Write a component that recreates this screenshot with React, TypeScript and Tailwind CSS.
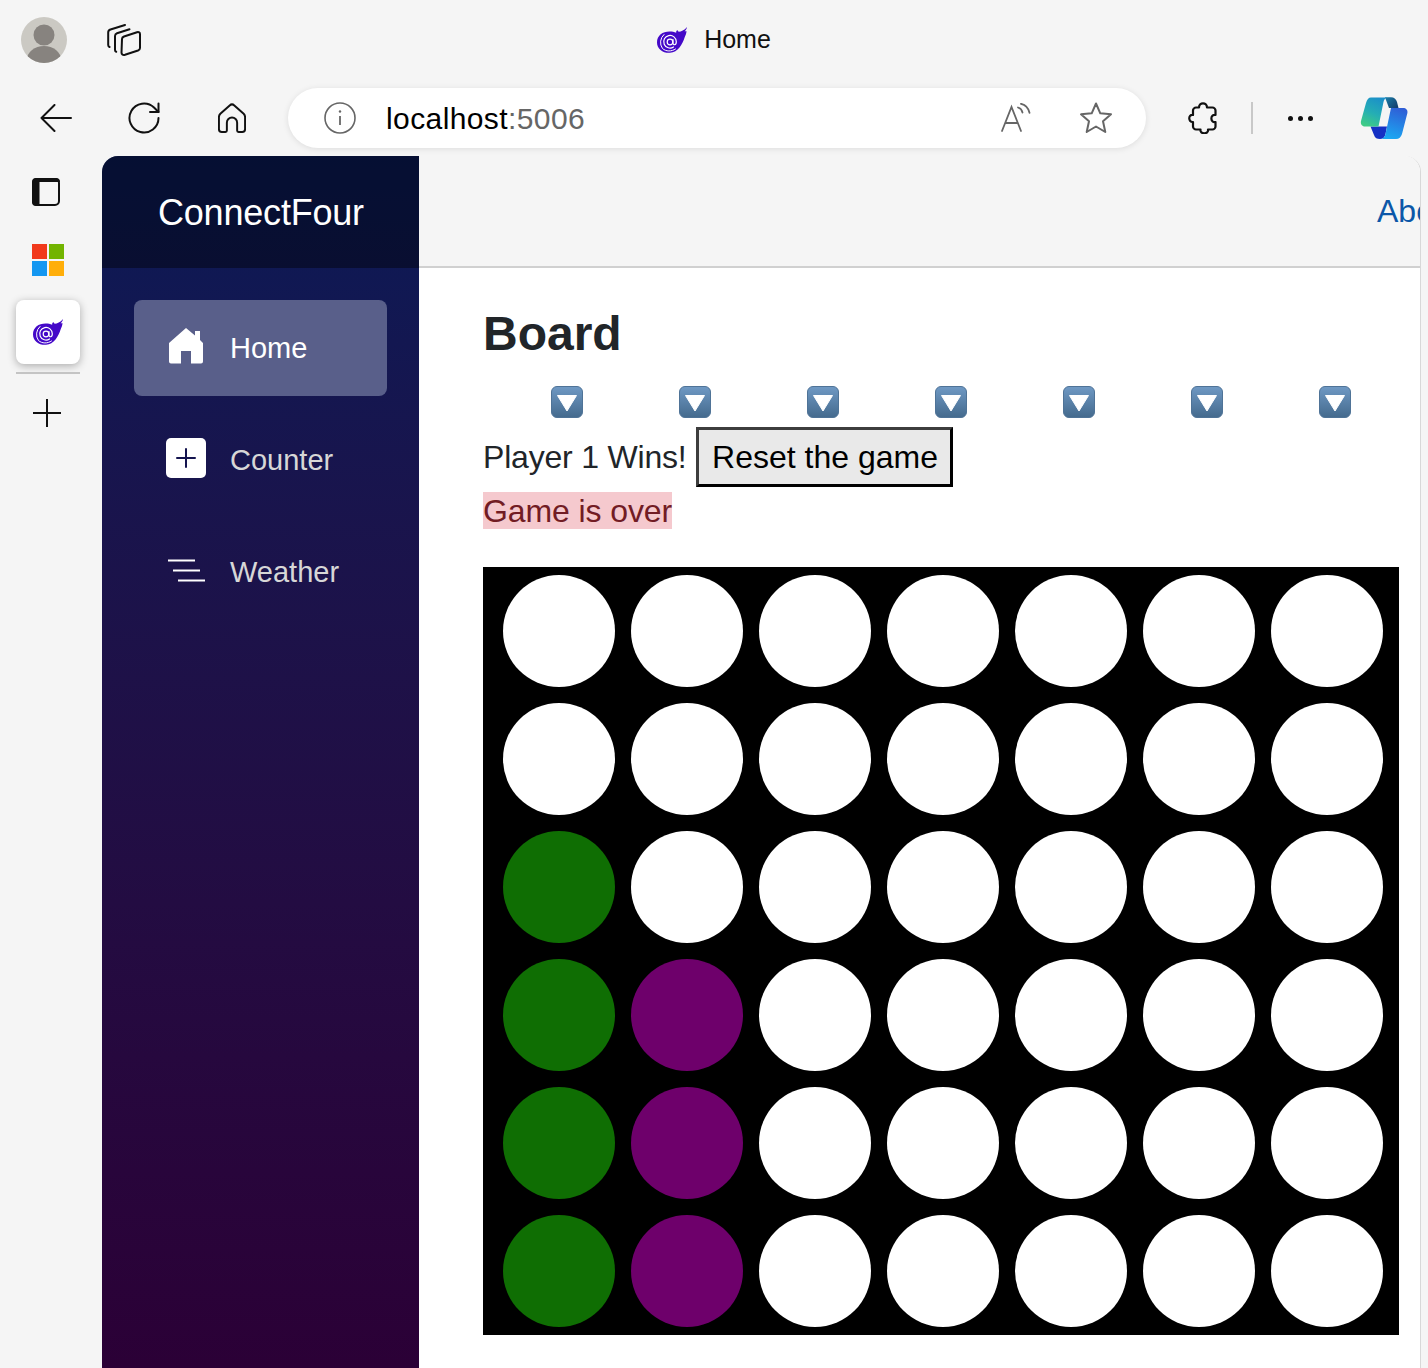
import React from 'react';

const SANS = "font-['Liberation_Sans',Arial,sans-serif]";

const BlazorLogo = ({ className }: { className: string }) => (
  <svg viewBox="0 0 30 26" className={className}>
    <path
      d="M30 0c-.4 2.2-1.2 3.2-2.4 4.2 .8 .1 1.5 .1 2 0-.4 2.6-1.2 4.4-2 6.2-2 6.6-6.6 14.8-14.6 15.4C6 26.2 0 22 0 15.4 0 8.6 5.6 4.6 12.6 4.600c2.6 0 4.6 .5 6.6 1.200C19 4.600 19.500 3.600 20.400 3c.2 .9 .6 1.500 1.400 1.800C24 4.600 27.400 3.400 30 0z"
      fill="#4408c8"
    />
    <g fill="none" stroke="#fff" strokeLinecap="round">
      <path d="M7 7.500A10.500 10.500 0 0 0 5.500 21.500c3.500 3.200 9 3.200 13 .5" strokeWidth="1" />
      <path d="M16 12.500v3.500c0 2.500 3.300 2.500 3.300-1.300A6.300 6.300 0 1 0 16.500 20" strokeWidth="1.200" />
      <circle cx="13" cy="15" r="2.800" strokeWidth="1.200" />
    </g>
  </svg>
);

const CopilotLogo = () => (
  <svg viewBox="0 0 48 42" className="w-[48px] h-[42px]">
    <defs>
      <linearGradient id="copL" x1="0.7" y1="0" x2="0.3" y2="1">
        <stop offset="0" stopColor="#1b8fc9" />
        <stop offset="0.55" stopColor="#25aeb4" />
        <stop offset="1" stopColor="#3ecb86" />
      </linearGradient>
      <linearGradient id="copR" x1="0.7" y1="0" x2="0.4" y2="1">
        <stop offset="0" stopColor="#2f5ed6" />
        <stop offset="1" stopColor="#1ba8f2" />
      </linearGradient>
      <linearGradient id="copT" x1="0" y1="0" x2="1" y2="0.7">
        <stop offset="0" stopColor="#1c7fa8" />
        <stop offset="1" stopColor="#13406f" />
      </linearGradient>
    </defs>
    <path d="M25 .3h6c3 0 5 1.700 6 4.700l1.500 6H29z" fill="url(#copT)" />
    <path d="M10.500 29.500H27L25.500 37c-.5 3-2.500 5-5.500 5s-5-1-6-4z" fill="#1530c4" />
    <path d="M11 .5h16c-2 .5-3 2.500-3.500 4.500l-5 24.500H5c-3 0-4.700-2.500-4-5.500L6 6c1-3.500 2.500-5.500 5-5.500z" fill="url(#copL)" />
    <path d="M31 11h12c3 0 5 2 4.400 5L42 37c-1 3-3 5-6 5H20c3 0 5-2 5.500-5z" fill="url(#copR)" />
  </svg>
);

const DownEmoji = () => (
  <svg viewBox="0 0 32 32" className="w-[32px] h-[32px] block">
    <defs>
      <linearGradient id="tile" x1="0" y1="0" x2="0" y2="1">
        <stop offset="0" stopColor="#6f99c4" />
        <stop offset="1" stopColor="#446a8d" />
      </linearGradient>
    </defs>
    <rect x="0.5" y="0.5" width="31" height="31" rx="5.500" fill="url(#tile)" stroke="#4f7397" />
    <path d="M6.500 9.500h19L16 25z" fill="#fff" stroke="#fff" strokeWidth="1" strokeLinejoin="round" />
  </svg>
);

const NavItem = ({ label, active, icon }: { label: string; active?: boolean; icon: React.ReactNode }) => (
  <div className={`h-[96px] rounded-lg flex items-center pl-8 ${active ? 'bg-[#595f8a] text-white' : 'text-[#d7d7d7]'}`}>
    <div className="w-[40px] h-[40px] flex items-center justify-center mr-6 mb-[4px]">{icon}</div>
    <span className="text-[29px] pt-[2px]">{label}</span>
  </div>
);

const rows = [
  'eeeeeee',
  'eeeeeee',
  'geeeeee',
  'gpeeeee',
  'gpeeeee',
  'gpeeeee',
];

const discColor = (c: string) => {
  if (c === 'g') return 'bg-[#0f6e03]';
  if (c === 'p') return 'bg-[#6e006b]';
  return 'bg-white';
};

const TitleBar = () => (
  <div className="h-[80px] shrink-0 grid grid-cols-[1fr_auto_1fr] items-center">
    <div className="flex items-center pl-[21px]">
      <svg viewBox="0 0 46 46" className="w-[46px] h-[46px]">
        <clipPath id="av"><circle cx="23" cy="23" r="23" /></clipPath>
        <circle cx="23" cy="23" r="23" fill="#cbc9c3" />
        <g clipPath="url(#av)">
          <circle cx="23" cy="18" r="10.500" fill="#87837f" />
          <ellipse cx="23" cy="43" rx="17" ry="14" fill="#87837f" />
        </g>
      </svg>
      <svg viewBox="0 0 34 32" className="w-[34px] h-[32px] ml-[40px]" fill="none" stroke="#111" strokeWidth="2" strokeLinejoin="round" strokeLinecap="round">
        <path d="M18 1 3.500 5.500C2 6 1.200 7 1.200 8.500V21c0 1 .5 1.600 1.300 2" />
        <path d="M22.500 5.300 10 9.300C8.600 9.800 8 10.800 8 12v14c0 1 .4 1.500 1.200 1.800" />
        <path d="M15 15c0-1.300 .7-2 2-2.500L30 8.200c1.800-.5 3 .3 3 2V24c0 1.300-.7 2-2 2.500L18 30.800c-2 .6-3.500-.3-3.500-2z" />
      </svg>
    </div>
    <div className="flex items-center">
      <BlazorLogo className="w-[30px] h-[26px]" />
      <span className="ml-[17px] text-[25px] text-[#111]">Home</span>
    </div>
    <div />
  </div>
);

const Toolbar = () => (
  <div className="h-[76px] shrink-0 flex items-center">
    <svg viewBox="0 0 32 28" className="ml-[40px] w-[32px] h-[28px]" fill="none" stroke="#111" strokeWidth="2" strokeLinecap="round" strokeLinejoin="round">
      <path d="M31 14H1.500M14.500 1 1.500 14l13 13" />
    </svg>
    <svg viewBox="0 0 32 32" className="ml-[56px] w-[32px] h-[32px]" fill="none" stroke="#111" strokeWidth="2" strokeLinecap="round" strokeLinejoin="round">
      <path d="M30.500 16A14.500 14.500 0 1 1 26 5.500L30.500 10" />
      <path d="M30.500 1.500V10H22" />
    </svg>
    <svg viewBox="0 0 30 32" className="ml-[58px] w-[28px] h-[30px]" fill="none" stroke="#111" strokeWidth="2.100" strokeLinejoin="round">
      <path d="M12.500 2.500 2.500 11.500C1.500 12.500 1 13.500 1 15v13c0 1.800 1.200 3 3 3h4c.8 0 1.500-.7 1.500-1.500V21c0-3 2.500-5.500 5.500-5.500s5.500 2.500 5.500 5.500v8.500c0 .8 .7 1.500 1.500 1.500h4c1.800 0 3-1.200 3-3V15c0-1.500-.5-2.500-1.500-3.500L17.500 2.500C16 1.200 14 1.200 12.500 2.500z" />
    </svg>
    <div className="ml-[42px] w-[858px] h-[60px] rounded-[30px] bg-white shadow-[0_1px_6px_rgba(0,0,0,0.1)] flex items-center">
      <svg viewBox="0 0 32 32" className="ml-[36px] w-[32px] h-[32px]" fill="none" stroke="#666" strokeWidth="1.600">
        <circle cx="16" cy="16" r="15" />
        <path d="M16 14v9" strokeWidth="1.800" />
        <circle cx="16" cy="9.500" r="1.200" fill="#666" stroke="none" />
      </svg>
      <span className="ml-[30px] text-[30px] tracking-[0.4px] text-black">localhost<span className="text-[#666]">:5006</span></span>
      <svg viewBox="0 0 32 30" className="ml-auto w-[32px] h-[30px]" fill="none" stroke="#666" strokeWidth="1.800" strokeLinecap="round">
        <path d="M1 28 10.500 4 20 28M4.500 20h12" />
        <path d="M17 4.500c2.500 .8 4 2.500 4.500 5M20 .8c4.500 1 7.500 4.500 8.500 9" />
      </svg>
      <svg viewBox="0 0 34 32" className="ml-[46px] mr-[33px] w-[34px] h-[32px]" fill="none" stroke="#666" strokeWidth="2" strokeLinejoin="round">
        <path d="M17 1.500 21.300 11.300 32 12.300 24 19.300 26.300 30 17 24.500 7.700 30 10 19.300 2 12.300 12.700 11.300z" />
      </svg>
    </div>
    <svg viewBox="0 0 30 32" className="ml-[42px] w-[30px] h-[32px]" fill="none" stroke="#111" strokeWidth="2.200" strokeLinejoin="round">
      <path d="M11 5.500c0-5.500 8-5.500 8 0h5.500c1.500 0 3 1.500 3 3V13c-5.500-1-5.500 8 0 7v4.500c0 1.500-1.500 3-3 3H20c1 5-8.500 5-7.500 0H8c-1.500 0-3-1.500-3-3V20C0 20.500 0 12 5 13V8.500c0-1.500 1.500-3 3-3z" />
    </svg>
    <div className="ml-[33px] w-[2px] h-[32px] bg-[#c8c8c8]" />
    <div className="ml-[35px] flex gap-[5px]">
      <div className="w-[5px] h-[5px] rounded-full bg-[#111]" />
      <div className="w-[5px] h-[5px] rounded-full bg-[#111]" />
      <div className="w-[5px] h-[5px] rounded-full bg-[#111]" />
    </div>
    <div className="ml-[47px]"><CopilotLogo /></div>
  </div>
);

const SideRail = () => (
  <div className="w-[102px] shrink-0 flex flex-col items-start">
    <svg viewBox="0 0 28 28" className="ml-[32px] mt-[22px] w-[28px] h-[28px]">
      <rect x="1" y="1" width="26" height="26" rx="4" fill="none" stroke="#111" strokeWidth="2" />
      <path d="M4 0h20a4 4 0 0 1 4 4H7.500V28H4a4 4 0 0 1-4-4V4a4 4 0 0 1 4-4z" fill="#111" />
    </svg>
    <div className="ml-[32px] mt-[38px] grid grid-cols-[15px_15px] grid-rows-[15px_15px] gap-[2px]">
      <div className="bg-[#f1391c]" />
      <div className="bg-[#72b400]" />
      <div className="bg-[#1497f1]" />
      <div className="bg-[#ffae0a]" />
    </div>
    <div className="ml-[16px] mt-[24px] w-[64px] h-[64px] rounded-[8px] bg-white shadow-[0_2px_8px_rgba(0,0,0,0.3)] flex items-center justify-center">
      <BlazorLogo className="w-[30px] h-[26px]" />
    </div>
    <div className="ml-[16px] mt-[8px] w-[64px] h-[2px] bg-[#c4c4c4]" />
    <svg viewBox="0 0 28 28" className="ml-[33px] mt-[25px] w-[28px] h-[28px]" fill="none" stroke="#111" strokeWidth="2">
      <path d="M14 0v28M0 14h28" />
    </svg>
  </div>
);

const Sidebar = () => (
  <div className="w-[317px] shrink-0 flex flex-col bg-gradient-to-b from-[#091a56] to-[#2b0036]">
    <div className="h-[112px] shrink-0 bg-black/40 flex items-center pl-[56px] pt-[2px]">
      <span className="text-[36px] tracking-[-0.2px] text-white">ConnectFour</span>
    </div>
    <div className="flex flex-col gap-4 px-8 pt-8">
      <NavItem
        label="Home"
        active
        icon={
          <svg viewBox="0 0 34 36" className="w-[34px] h-[36px]" fill="#fff">
            <path d="M17 0 26 7.500V3h5v9l3 3v18.500a2 2 0 0 1-2 2H22V23H12v12.500H2a2 2 0 0 1-2-2V15z" />
          </svg>
        }
      />
      <NavItem
        label="Counter"
        icon={
          <div className="w-[40px] h-[40px] shrink-0 rounded-[5px] bg-white flex items-center justify-center">
            <svg viewBox="0 0 20 20" className="w-[20px] h-[20px]" fill="none" stroke="#14144f" strokeWidth="2" strokeLinecap="round">
              <path d="M10 1v18M1 10h18" />
            </svg>
          </div>
        }
      />
      <NavItem
        label="Weather"
        icon={
          <svg viewBox="0 0 38 23" className="w-[38px] h-[23px] shrink-0" stroke="#fff" strokeWidth="2" fill="none">
            <path d="M1 1.500h27M6 11.500h27M11 21.500h27" />
          </svg>
        }
      />
    </div>
  </div>
);

const MainPane = () => (
  <div className="flex-1 min-w-0 flex flex-col bg-white border-r border-[#d8d8d8] rounded-tr-[16px] overflow-hidden">
    <div className="h-[112px] shrink-0 bg-[#f5f5f5] border-b-2 border-[#d0d0d0] flex items-center pl-[958px] overflow-hidden">
      <span className="text-[32px] text-[#0b57a8] whitespace-nowrap">About</span>
    </div>
    <div className="pl-[64px] pt-[37px] text-[32px] text-[#212529]">
      <h1 className="text-[48px] leading-[58px] font-bold">Board</h1>
      <div className="mt-[23px] pl-[68px] flex">
        {Array.from({ length: 7 }).map((_, i) => (
          <div key={i} className="w-[128px] shrink-0"><DownEmoji /></div>
        ))}
      </div>
      <div className="mt-[9px] flex items-center">
        <span className="tracking-[-0.2px]">Player 1 Wins!</span>
        <button className="ml-[10px] w-[257px] h-[60px] bg-[#e9e9e9] text-black border-[3px] border-t-[#3d3d3d] border-l-[#3d3d3d] border-r-black border-b-black">Reset the game</button>
      </div>
      <div className="mt-[5px] flex">
        <span className="h-[37px] leading-[39px] tracking-[-0.1px] bg-[#f5c9ce] text-[#721c24]">Game is over</span>
      </div>
      <div className="mt-[38px] w-[916px] h-[768px] bg-black pl-[12px] grid grid-cols-[repeat(7,128px)] auto-rows-[128px]">
        {rows.flatMap((row, r) =>
          row.split('').map((c, i) => (
            <div key={`${r}-${i}`} className="flex items-center justify-center">
              <div className={`w-[112px] h-[112px] rounded-full ${discColor(c)}`} />
            </div>
          ))
        )}
      </div>
    </div>
  </div>
);

const App = () => (
  <div className={`w-[1428px] h-[1368px] overflow-hidden bg-[#f5f5f5] flex flex-col ${SANS}`}>
    <TitleBar />
    <Toolbar />
    <div className="flex-1 min-h-0 flex pr-[7px]">
      <SideRail />
      <div className="flex-1 min-w-0 flex rounded-tl-[16px] overflow-hidden">
        <Sidebar />
        <MainPane />
      </div>
    </div>
  </div>
);

export default App;
